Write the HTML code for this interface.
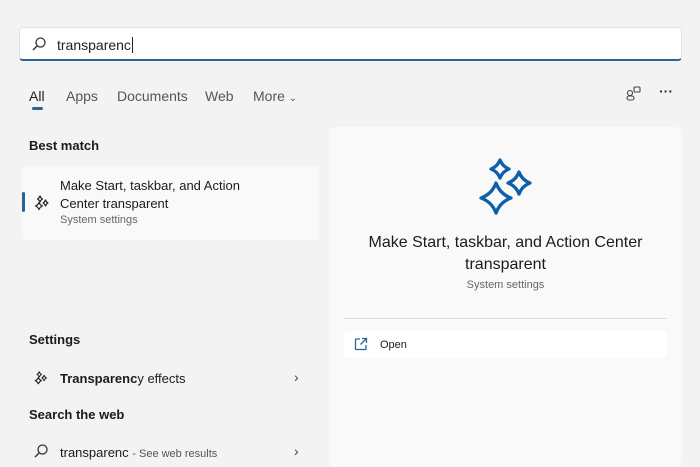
<!DOCTYPE html>
<html><head><style>
body{margin:0;width:700px;height:462px;background:#f3f3f3;font-family:"Liberation Sans",sans-serif;position:relative;overflow:hidden;color:#1b1b1b}
.a{position:absolute;white-space:nowrap}
</style></head><body>
<div class="a" style="left:19px;top:27px;width:663px;height:34px;background:#fff;border-radius:4px;border:1px solid #e3e3e3;border-bottom:2px solid #2a6496;box-sizing:border-box"></div>
<svg class="a" style="left:31px;top:36px" width="16" height="16" viewBox="0 0 16 16"><circle cx="9.5" cy="6.5" r="4.5" fill="none" stroke="#333" stroke-width="1.3"/><path d="M6.3 9.7L2 14" stroke="#333" stroke-width="1.4"/></svg>
<div class="a" style="left:57px;top:37px;font-size:14px;color:#222">transparenc<span style="border-left:1px solid #222;margin-left:1px"></span></div>
<div class="a" style="left:29px;top:88px;font-size:14px;color:#222">All</div>
<div class="a" style="left:32px;top:107px;width:11px;height:3px;border-radius:2px;background:#2a6496"></div>
<div class="a" style="left:66px;top:88px;font-size:14px;color:#555">Apps</div>
<div class="a" style="left:117px;top:88px;font-size:14px;color:#555">Documents</div>
<div class="a" style="left:205px;top:88px;font-size:14px;color:#555">Web</div>
<div class="a" style="left:253px;top:88px;font-size:14px;color:#555">More <span style="font-size:10px">&#8964;</span></div>
<svg class="a" style="left:625px;top:85px" width="18" height="18" viewBox="0 0 18 18" fill="none" stroke="#444" stroke-width="1.1"><circle cx="5" cy="8" r="2.5"/><rect x="9" y="2" width="6" height="5" rx="1"/><rect x="2" y="11" width="7" height="4" rx="2"/></svg>
<div class="a" style="left:659px;top:83px;font-size:14px;color:#333;font-weight:bold">···</div>
<div class="a" style="left:29px;top:138px;font-size:13px;font-weight:bold">Best match</div>
<div class="a" style="left:22px;top:166px;width:297px;height:74px;background:#f9f9f9;border-radius:4px"></div>
<div class="a" style="left:22px;top:192px;width:3px;height:20px;background:#2a6496;border-radius:2px"></div>
<svg class="a" style="left:33px;top:194px" width="18" height="18" viewBox="0 0 18 18" fill="none" stroke="#222" stroke-width="1.2" stroke-linejoin="round"><path d="M7 2Q7.8 4.2 9.5 5Q7.8 5.8 7 8Q6.2 5.8 4.5 5Q6.2 4.2 7 2Z"/><path d="M12.5 6Q13.3 8.2 15 9Q13.3 9.8 12.5 12Q11.7 9.8 10 9Q11.7 8.2 12.5 6Z"/><path d="M6 8.5Q7 11 9.5 12Q7 13 6 15.5Q5 13 2.5 12Q5 11 6 8.5Z"/></svg>
<div class="a" style="left:60px;top:177px;font-size:13px;line-height:18px">Make Start, taskbar, and Action<br>Center transparent</div>
<div class="a" style="left:60px;top:214px;font-size:11px;color:#666">System settings</div>
<div class="a" style="left:29px;top:332px;font-size:13px;font-weight:bold">Settings</div>
<svg class="a" style="left:33px;top:370px" width="16" height="16" viewBox="0 0 18 18" fill="none" stroke="#222" stroke-width="1.2" stroke-linejoin="round"><path d="M7 2Q7.8 4.2 9.5 5Q7.8 5.8 7 8Q6.2 5.8 4.5 5Q6.2 4.2 7 2Z"/><path d="M12.5 6Q13.3 8.2 15 9Q13.3 9.8 12.5 12Q11.7 9.8 10 9Q11.7 8.2 12.5 6Z"/><path d="M6 8.5Q7 11 9.5 12Q7 13 6 15.5Q5 13 2.5 12Q5 11 6 8.5Z"/></svg>
<div class="a" style="left:60px;top:371px;font-size:13px"><b style="font-weight:600">Transparenc</b>y effects</div>
<div class="a" style="left:294px;top:369px;font-size:14px;color:#444">›</div>
<div class="a" style="left:29px;top:407px;font-size:13px;font-weight:bold">Search the web</div>
<svg class="a" style="left:33px;top:443px" width="16" height="16" viewBox="0 0 16 16"><circle cx="9.5" cy="6.5" r="4.5" fill="none" stroke="#333" stroke-width="1.3"/><path d="M6.3 9.7L2 14" stroke="#333" stroke-width="1.4"/></svg>
<div class="a" style="left:60px;top:445px;font-size:13px">transparenc <span style="font-size:11px;color:#555">- See web results</span></div>
<div class="a" style="left:294px;top:443px;font-size:14px;color:#444">›</div>
<div class="a" style="left:329px;top:127px;width:353px;height:340px;background:#f9f9f9;border-radius:6px"></div>
<svg class="a" style="left:470px;top:150px" width="70" height="70" viewBox="470 150 70 70" fill="none" stroke="#0f5fa8" stroke-width="3.3" stroke-linejoin="round"><path d="M500 160Q502.5 166.5 509 169Q502.5 171.5 500 178Q497.5 171.5 491 169Q497.5 166.5 500 160Z"/><path d="M519 172Q522 180 530 183Q522 186 519 194Q516 186 508 183Q516 180 519 172Z"/><path d="M496 183Q500 194 511 198Q500 202 496 213Q492 202 481 198Q492 194 496 183Z"/></svg>
<div class="a" style="left:329px;top:232px;width:353px;text-align:center;font-size:16px;line-height:22px;white-space:normal">Make Start, taskbar, and Action Center<br>transparent</div>
<div class="a" style="left:329px;top:279px;width:353px;text-align:center;font-size:11px;color:#666">System settings</div>
<div class="a" style="left:344px;top:318px;width:323px;height:1px;background:#ddd"></div>
<div class="a" style="left:344px;top:331px;width:323px;height:27px;background:#fff;border-radius:3px"></div>
<svg class="a" style="left:354px;top:337px" width="14" height="14" viewBox="0 0 14 14" fill="none" stroke="#2a6496" stroke-width="1.3"><path d="M6 2H2.5Q1.5 2 1.5 3V11.5Q1.5 12.5 2.5 12.5H11Q12 12.5 12 11.5V8"/><path d="M8 1.5H12.5V6M12.5 1.5L6.5 7.5"/></svg>
<div class="a" style="left:380px;top:339px;font-size:11px">Open</div>
</body></html>
